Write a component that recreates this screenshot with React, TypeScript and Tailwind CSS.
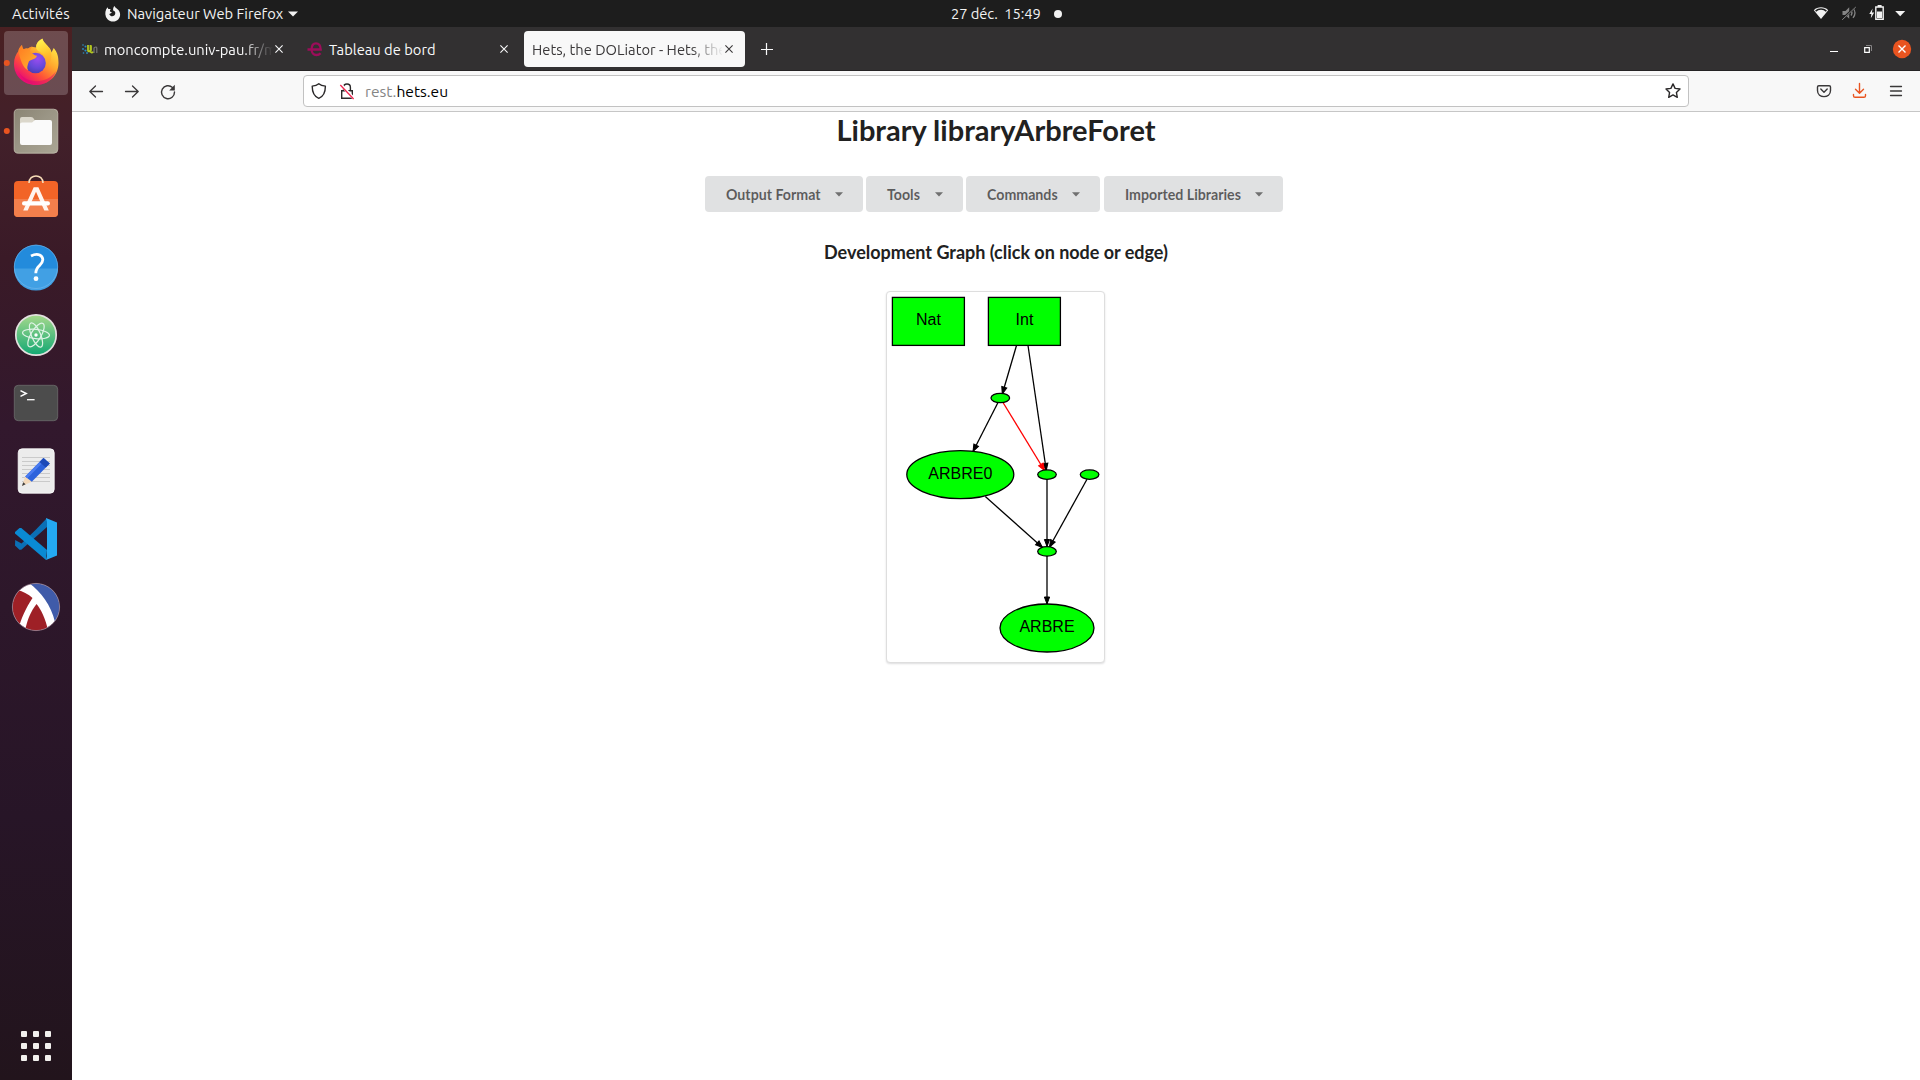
import React from "react";

const UI = "font-['Ubuntu','Noto_Sans',sans-serif]";

function TopBar() {
  return (
    <header className={`${UI} grid h-[27px] shrink-0 grid-cols-3 items-center bg-[#1d1d1d] text-[14.72px] leading-[26px] text-[#f2f2f2]`}>
      <div className="flex h-full items-center whitespace-nowrap pl-3">
        <span className="w-[59px] tracking-[0.1px]">Activités</span>
        <svg className="ml-[33px] h-[18px] w-[18px] shrink-0" viewBox="104 4 18 18">
          <path d="M106.2 8.2 L107.6 6.3 L108.3 8 L110.8 8.1 C109.8 9 109.7 10.2 110.6 11 L112 11.3 C111 12.8 109.6 12.7 109.3 13.2 C110.2 15.6 113.8 16 115 13.6 C116 11.5 114.6 10 113.2 9.6 C112.8 7.6 113.4 6 114.6 5 C115 7 117 7.3 118.4 9 C120.6 11.7 120.8 15.4 118.4 18.2 C115.6 21.4 110.4 21.4 107.5 18.2 C104.9 15.3 104.8 11.4 106.2 8.2 Z" fill="#f2f2f2" />
        </svg>
        <span className="ml-[5px] w-[157px]">Navigateur Web Firefox</span>
        <svg className="ml-[4px] h-[6px] w-[10px]" viewBox="0 0 10 6"><path d="M0 .5h10L5 5.6z" fill="#f2f2f2" /></svg>
      </div>
      <div className="flex h-full items-center whitespace-pre pl-[311px]">
        <span className="w-[91px] tracking-[-0.08px]">27 déc.  15:49</span>
        <span className="ml-[12px] h-2 w-2 rounded-full bg-[#f2f2f2]" />
      </div>
      <div className="flex h-full items-center justify-end">
        <svg className="h-[27px] w-[110px]" viewBox="1810 0 110 27">
          <path d="M1813.8 10.2 C1817.5 6.4 1824.5 6.4 1828.2 10.2 L1821 19 Z" fill="#f2f2f2" />
          <path d="M1815.6 11.1 C1818.5 8.4 1823.5 8.4 1826.4 11.1" fill="none" stroke="#1d1d1d" strokeWidth="1.5" />
          <g stroke="#858585" fill="none" strokeWidth="1.3">
            <path d="M1842.5 11h3l3.7-3.7v11.4l-3.7-3.7h-3z" fill="#858585" stroke="none" />
            <path d="M1851 10.5q2 2.5 0 5M1853 8.2q4 4.8 0 9.6" />
            <path d="M1841.8 19.6L1856 6.2" stroke="#1d1d1d" strokeWidth="2" />
            <path d="M1842.2 19.8L1855.8 7" strokeWidth="1" />
          </g>
          <path d="M1872.6 8.5l-3.3 5.6h2.1l-.6 4.2 3.4-5.7h-2.3z" fill="#f2f2f2" />
          <path d="M1875.8 7h7.4v12.2h-7.4z" fill="none" stroke="#f2f2f2" strokeWidth="1.4" />
          <path d="M1877.6 5h4v2h-4zM1877 11.5h5V18h-5z" fill="#f2f2f2" />
          <path d="M1895.2 11h10l-5 5.2z" fill="#f2f2f2" />
        </svg>
      </div>
    </header>
  );
}

function DockIcon({ row, running, active, children }: { row: number; running?: boolean; active?: boolean; children: React.ReactNode }) {
  return (
    <svg className="h-[68px] w-[72px] shrink-0" viewBox={`0 ${29 + row * 68} 72 68`}>
      {active && <rect x="4" y="31" width="64" height="64" rx="4" fill="#fff" fillOpacity=".2" />}
      {running && <circle cx="6.8" cy={63 + row * 68} r="3" fill="#e95420" />}
      {children}
    </svg>
  );
}

function Dock() {
  return (
    <nav className="flex w-[72px] shrink-0 flex-col bg-[linear-gradient(180deg,#4a2022_0%,#42202a_10%,#3a1a27_22%,#32182d_38%,#2d172a_55%,#271527_75%,#22141c_100%)] pt-[2px]">
      <DockIcon row={0} running active>
        <defs>
          <linearGradient id="ffBody" x1=".9" y1=".1" x2=".25" y2=".95">
            <stop offset="0" stopColor="#fff14a" /><stop offset=".4" stopColor="#ffa52c" /><stop offset=".7" stopColor="#ff5038" /><stop offset="1" stopColor="#e80878" />
          </linearGradient>
          <linearGradient id="ffTail" x1=".4" y1="0" x2=".6" y2="1">
            <stop offset="0" stopColor="#fff44f" /><stop offset=".5" stopColor="#ffc72e" /><stop offset="1" stopColor="#ff8a1e" stopOpacity="0" />
          </linearGradient>
          <radialGradient id="ffGlobe" cx=".6" cy=".3" r=".75">
            <stop offset="0" stopColor="#9a4df0" /><stop offset=".6" stopColor="#6548d8" /><stop offset="1" stopColor="#4a3cae" />
          </radialGradient>
          <linearGradient id="ffFox" x1="0" y1="0" x2="1" y2="1">
            <stop offset="0" stopColor="#ff7a22" /><stop offset="1" stopColor="#ffb52e" />
          </linearGradient>
        </defs>
        <path d="M14 64c0-6 2-10 4.500-13 .1-2 1.500-4 3.500-6 .2 2 .5 3 1.500 4.200 1.500-.6 3-.8 4.500-.4 2-2 5-2.400 9-1.300-1.500-4 2-7.500 5.500-9 1 4 4.500 6 6 8.500 1.500 1 2.500 3 3 5.500l2.200-4.500c4 4.500 4.800 9 4.800 15 0 12.500-10 22-22.500 22S14 76 14 64z" fill="url(#ffBody)" />
        <circle cx="35.500" cy="63" r="10.300" fill="url(#ffGlobe)" />
        <path d="M18.500 51c.1-2 1.500-4 3.500-6 .2 2 .5 3 1.500 4.200 1.500-.6 3-.8 4.500-.4 1.500-1.600 2.500-2 4.800-2.600-2 1.800-2.800 3.700-2.800 5 2 1 3 3.800 7 4.600-1 4-6.500 3.700-8 5.500-1.500 4-2.500 7-1 9-5.500-3-8-11.300-9.500-19.300z" fill="url(#ffFox)" />
        <path d="M42.500 39c1 4 4.500 6 6 8.500 4.500 6 3.500 13.500-1.500 20 .5-7-2-13-8-16-5-3-3.500-9.500 3.500-12.500z" fill="url(#ffTail)" />
        <path d="M18 71c7 13 29 14 38 0-6 18-30 19-38 0z" fill="#d90475" fillOpacity=".45" />
      </DockIcon>
      <DockIcon row={1} running>
        <defs><linearGradient id="files" x2="1" y2="1"><stop stopColor="#8a8473" /><stop offset=".45" stopColor="#9a9585" /><stop offset="1" stopColor="#aaa594" /></linearGradient></defs>
        <rect x="14.200" y="109.200" width="43.600" height="44" rx="4" fill="url(#files)" stroke="#c4bfb0" strokeWidth=".8" />
        <path d="M20 119q0-2 2-2h9q2 0 3 2l1 2h15v4H20z" fill="#dbd7cb" />
        <path d="M20 124q0-1.500 2-1.500h10l3-2.500h15q2 0 2 2v21q0 2-2 2H22q-2 0-2-2z" fill="#fafafa" />
      </DockIcon>
      <DockIcon row={2}>
        <rect x="14" y="181" width="44" height="36" rx="4" fill="#f26427" />
        <path d="M14 199h44v14q0 4-4 4H18q-4 0-4-4z" fill="#f37f4c" />
        <path d="M29 183c0-9.500 14-9.500 14 0" fill="none" stroke="#f8ddb8" strokeWidth="1.500" />
        <path d="M33.700 187.300h4.700l10.400 23.200h-4.500L36 191.800 27.700 210.500h-4.500z" fill="#fff4ee" />
        <rect x="22" y="201.300" width="28" height="4.200" rx="2.100" fill="#fff" />
      </DockIcon>
      <DockIcon row={3}>
        <circle cx="36" cy="266.800" r="22" fill="#238bdc" />
        <path d="M14 268.600a22 22 0 0 0 44 0z" fill="#41a0e4" />
        <circle cx="36" cy="266.800" r="21.700" fill="none" stroke="#76b9ec" strokeWidth=".6" />
        <path d="M31 256q5-2.600 8.700-1c4.600 2.500 3.600 7.300 0 10.300-2.800 2.400-3.900 4.200-3.900 8" fill="none" stroke="#fff" strokeWidth="2.800" />
        <circle cx="36" cy="278.700" r="2.400" fill="#fff" />
      </DockIcon>
      <DockIcon row={4}>
        <defs><linearGradient id="atom" x2="0" y2="1"><stop stopColor="#a6d98c" /><stop offset="1" stopColor="#12a873" /></linearGradient></defs>
        <circle cx="36" cy="335" r="20.200" fill="url(#atom)" stroke="#e3e0df" strokeWidth="1.700" />
        <g fill="none" stroke="#dff3e6" strokeWidth="1.200">
          <ellipse cx="36" cy="334" rx="13.500" ry="4.600" transform="rotate(6 36 334)" />
          <ellipse cx="36" cy="335" rx="13" ry="4.600" transform="rotate(67 36 335)" />
          <ellipse cx="36" cy="335" rx="13.500" ry="5" transform="rotate(121 36 335)" />
        </g>
        <circle cx="36" cy="335" r="1.700" fill="#fff" />
      </DockIcon>
      <DockIcon row={5}>
        <rect x="14.300" y="385.300" width="43.400" height="35.400" rx="4" fill="#4c4c4c" stroke="#6c6c6c" strokeWidth=".8" />
        <path d="M20.500 390.700l5.700 2.800-5.700 2.800" fill="none" stroke="#fff" strokeWidth="1.500" />
        <path d="M27 399.700h7.600" stroke="#fff" strokeWidth="1.300" />
      </DockIcon>
      <DockIcon row={6}>
        <rect x="18.200" y="448.800" width="36" height="44.400" rx="4" fill="#ececec" stroke="#fff" strokeWidth=".8" />
        <path d="M22 457.500h28M22 461.500h28M22 465.500h28M22 469.500h28M22 473.500h28M22 477.500h28M22 481.500h28" stroke="#cacaca" strokeWidth="1" />
        <path d="M22 486l3.200-9.500 6.500 5.200z" fill="#f4d9ba" />
        <path d="M22 486l1.200-3.700 2.400 2z" fill="#3f3f3f" />
        <path d="M25.200 476.500L43.500 458l6.300 5.500-18 18.300z" fill="#2d63dc" />
        <path d="M25.200 476.500L43.500 458l2 1.700-18.200 18.600z" fill="#4b7cf0" />
        <path d="M39.500 462l4-4 6.300 5.500-4 4z" fill="#1c4ab8" />
      </DockIcon>
      <DockIcon row={7}>
        <path d="M47 518l-11 11.500-14.500 14L15.200 540l-.2 5.500 4.500 4.300h1.800L47 527z" fill="#0b6fb5" />
        <path d="M19.500 528l-4.500 4v1.500L46 560l1-10-25.700-22z" fill="#0a8ad3" />
        <path d="M46 518l11 4.500v33L46 560l1-4v-34z" fill="#24a9f2" />
      </DockIcon>
      <DockIcon row={8}>
        <defs><clipPath id="lyx"><circle cx="36" cy="607" r="23.500" /></clipPath></defs>
        <g clipPath="url(#lyx)">
          <path d="M12 583h48v48H12z" fill="#fff" />
          <path d="M12 583v48h6c3-13 8-23 14.500-33-4-4-10-7-16-8z" fill="#9e2026" />
          <path d="M29 583c12 9 22 22 26 39h6v-39z" fill="#3f5ba9" />
          <path d="M25 632c1.500-11 6-21 11.500-28 5 6 9 15 12 28z" fill="#9e2026" />
        </g>
        <circle cx="36" cy="607" r="23.600" fill="none" stroke="#9b8192" strokeWidth=".7" />
      </DockIcon>
      <div className="mt-auto grid grid-cols-[repeat(3,6px)] gap-[6px] self-start pb-[19px] pl-[21px]">
        {Array.from({ length: 9 }, (_, i) => <span key={i} className="h-[6px] w-[6px] rounded-[1px] bg-[#f2f0ee]" />)}
      </div>
    </nav>
  );
}

function CloseX({ className }: { className: string }) {
  return (
    <svg className={`h-[8px] w-[8px] shrink-0 ${className}`} viewBox="0 0 8 8"><path d="M.4.4l7.200 7.200M7.600.4L.4 7.600" stroke="currentColor" strokeWidth="1.100" /></svg>
  );
}

function TabBar() {
  return (
    <div className={`${UI} flex h-[44px] shrink-0 items-center whitespace-nowrap border-b border-[#252324] bg-[#323031] pl-[2px] text-[14.72px] leading-[22px] text-[#f9f9fa]`}>
      <div className="flex h-9 w-[225px] items-center pl-2">
        <svg className="h-4 w-4 shrink-0" viewBox="82 41 16 16">
          <g fill="#2e8fc4"><circle cx="83" cy="45" r=".8" /><circle cx="85.500" cy="46.500" r="1" /><circle cx="83" cy="49" r=".9" /><circle cx="85.500" cy="50.500" r="1.100" /><circle cx="83.500" cy="53" r=".8" /><circle cx="87" cy="53" r=".9" /></g>
          <path d="M88 45v5.500q.5 2 3-.5V45.500M90.500 45v6q0 2.500 3 1" fill="none" stroke="#b4c81e" strokeWidth="1.800" />
          <path d="M94 53v-5q2.800-2.200 2.800.5V53" fill="none" stroke="#777" strokeWidth="1.200" />
        </svg>
        <span className="ml-[6px] w-[169px] pt-[2px] [mask-image:linear-gradient(90deg,#000_82%,transparent)]">moncompte.univ-pau.fr/m</span>
        <CloseX className="ml-[2px]" />
      </div>
      <div className="flex h-9 w-[225px] items-center pl-2">
        <svg className="h-4 w-4 shrink-0" viewBox="0 0 16 16"><path d="M.5 8.500h13.200C13.500 4 11.500 2.300 9 2.300 6 2.300 4.600 5 4.600 8.300c0 3.500 2 5.700 4.800 5.700 2 0 3.200-.7 4.200-1.800" fill="none" stroke="#9c0d5a" strokeWidth="2.300" /></svg>
        <span className="ml-[6px] w-[169px] pt-[2px]">Tableau de bord</span>
        <CloseX className="ml-[2px]" />
      </div>
      <div className="flex h-9 w-[221px] items-center rounded-[4px] bg-[#f8f8f8] pl-2 text-[#3a3839]">
        <span className="w-[190px] pt-[2px] [mask-image:linear-gradient(90deg,#000_84%,rgba(0,0,0,0.4)_93%,transparent_101%)]">Hets, the DOLiator - Hets, the</span>
        <CloseX className="ml-[3px]" />
      </div>
      <svg className="ml-[16px] h-3 w-3" viewBox="0 0 12 12"><path d="M5.500 0v12M0 6.500h12" stroke="#f9f9fa" strokeWidth="1.200" /></svg>
      <svg className="ml-auto h-[42px] w-[100px]" viewBox="1820 28 100 42">
        <path d="M1830 51.500h8" stroke="#fff" />
        <path d="M1864.700 47.700h4.600v4.600h-4.600z" fill="none" stroke="#fff" strokeWidth="1.200" />
        <path d="M1866 45.500h5.500v5.500" fill="none" stroke="#858384" />
        <circle cx="1902" cy="49" r="9.200" fill="#e95420" />
        <path d="M1898.500 45.500l7 7m0-7l-7 7" stroke="#fff" strokeWidth="1.400" />
      </svg>
    </div>
  );
}

function Toolbar() {
  return (
    <div className="flex h-[41px] shrink-0 border-b border-[#c6c6c6] bg-[#f8f8f8]">
      <svg className="h-10 w-[231px] shrink-0" viewBox="72 71 231 40">
        <g fill="none" stroke="#3a3839" strokeWidth="1.300" strokeLinecap="round" strokeLinejoin="round">
          <path d="M102.500 91.500H90M95.500 86l-5.700 5.500 5.700 5.500" />
          <path d="M125.500 91.500H138M132.500 86l5.700 5.500-5.700 5.500" />
          <path d="M172.500 87.500A6.500 6.500 0 1 0 174.500 92" strokeWidth="1.400" />
        </g>
        <path d="M174.800 84.800v5.600h-5.600z" fill="#3a3839" />
      </svg>
      <div className={`${UI} mt-[4px] flex h-8 w-[1386px] items-center rounded-[4px] border border-[#c2c2c2] bg-white text-[15.6px]`}>
        <svg className="h-[30px] w-[54px]" viewBox="304 76 54 30">
          <path d="M318.800 83.700c1.700 1.500 4 2.200 6.600 2.400 0 6.500-1.700 10.500-6.600 12.200-4.900-1.700-6.600-5.700-6.600-12.200 2.600-.2 4.900-.9 6.600-2.400z" fill="none" stroke="#2a2829" strokeWidth="1.400" strokeLinejoin="round" />
          <path d="M341.700 90.700h10.600v7.600h-10.600z" fill="none" stroke="#2a2829" strokeWidth="1.400" />
          <path d="M343.600 90.500v-3q0-3.500 3.400-3.500t3.400 3.500v3" fill="none" stroke="#2a2829" strokeWidth="1.400" />
          <path d="M340.800 84.600l13 14" stroke="#fff" strokeWidth="3" /><path d="M340.300 85l13.300 14" stroke="#f0244f" strokeWidth="1.300" />
        </svg>
        <span className="ml-[7px] pt-px text-[#858585]">rest.<span className="text-black">hets.eu</span></span>
        <svg className="ml-auto mr-[6px] h-[18px] w-[18px]" viewBox="0 0 18 18"><path d="M9 1.900l2.100 4.500 4.900.6-3.600 3.400.9 4.900L9 12.900l-4.300 2.400.9-4.900L2 7l4.900-.6z" fill="none" stroke="#2a2829" strokeWidth="1.400" strokeLinejoin="round" /></svg>
      </div>
      <svg className="ml-auto h-10 w-[120px]" viewBox="1800 71 120 40">
        <g fill="none" stroke="#3a3839" strokeWidth="1.400" strokeLinecap="round" strokeLinejoin="round">
          <path d="M1818.800 85.700h10.400q1.300 0 1.300 1.300v3.500c0 8.200-13 8.200-13 0V87q0-1.300 1.300-1.300z" />
          <path d="M1820.800 89l3.200 3.200 3.200-3.200" />
          <path d="M1890.500 86.500h11M1890.500 91h11M1890.500 95.500h11" strokeWidth="1.300" />
          <path d="M1859.500 83.500v9.500M1855.500 89.300l4 4 4-4M1853.500 94.500v1.200q0 1.600 1.600 1.600h8.800q1.600 0 1.600-1.600v-1.200" stroke="#e95420" />
        </g>
      </svg>
    </div>
  );
}

function MenuButton({ label, width }: { label: string; width: string }) {
  return (
    <button className={`flex h-9 items-center justify-between rounded-[4px] bg-[#e0e1e2] pl-[21px] pr-[20px] text-[14.2px] font-bold leading-[14px] text-black/60 ${width}`}>
      <span className="whitespace-nowrap pt-[2px]">{label}</span>
      <svg className="h-[5px] w-[8px]" viewBox="0 0 8 5"><path d="M0 .3h8L4 4.500z" fill="#707070" /></svg>
    </button>
  );
}

const edges = [
  { x1: 1016.5, y1: 345.5, x2: 1002.3, y2: 394, c: "#000" },
  { x1: 1028, y1: 345.5, x2: 1046.3, y2: 470.5, c: "#000" },
  { x1: 998, y1: 402.5, x2: 973, y2: 451.5, c: "#000" },
  { x1: 1003, y1: 402.5, x2: 1044.5, y2: 470.5, c: "#f00" },
  { x1: 985.3, y1: 496.5, x2: 1042.5, y2: 547.5, c: "#000" },
  { x1: 1047, y1: 479.3, x2: 1047, y2: 546.5, c: "#000" },
  { x1: 1087, y1: 479.3, x2: 1049.5, y2: 547, c: "#000" },
  { x1: 1047, y1: 556, x2: 1047, y2: 604, c: "#000" },
];

function Edge({ x1, y1, x2, y2, c }: { x1: number; y1: number; x2: number; y2: number; c: string }) {
  const angle = (Math.atan2(y2 - y1, x2 - x1) * 180) / Math.PI;
  return (
    <g stroke={c} fill={c}>
      <line x1={x1} y1={y1} x2={x2} y2={y2} strokeWidth="1.300" />
      <path d="M0 0L-7-2.600V2.600z" transform={`translate(${x2} ${y2}) rotate(${angle})`} strokeWidth="1" />
    </g>
  );
}

function Graph() {
  return (
    <div className="mr-[2px] mt-[27px] h-[372px] w-[219px] rounded-[4px] border border-[#dedede] bg-white shadow-[0_1px_2px_0_rgba(34,36,38,0.15)]">
      <svg className="h-[370px] w-[217px] font-['Liberation_Sans',sans-serif] text-[16px]" viewBox="887 292 217 370">
        {edges.map((e, i) => <Edge key={i} {...e} />)}
        <g fill="#0f0" stroke="#000" strokeWidth="1.300">
          <rect x="892.400" y="297.400" width="72" height="48" />
          <rect x="988.400" y="297.400" width="72" height="48" />
          <ellipse cx="1000.300" cy="398" rx="9.300" ry="4.700" />
          <ellipse cx="960.300" cy="474.600" rx="53.500" ry="24" />
          <ellipse cx="1047" cy="474.600" rx="9.300" ry="4.700" />
          <ellipse cx="1089.600" cy="474.600" rx="9.300" ry="4.700" />
          <ellipse cx="1047" cy="551.400" rx="9.300" ry="4.700" />
          <ellipse cx="1047" cy="628" rx="47" ry="24" />
        </g>
        <g textAnchor="middle" fill="#000">
          <text x="928.400" y="325">Nat</text>
          <text x="1024.500" y="325">Int</text>
          <text x="960.300" y="479">ARBRE0</text>
          <text x="1047" y="632">ARBRE</text>
        </g>
      </svg>
    </div>
  );
}

export default function App() {
  return (
    <div className="flex h-[1080px] w-[1920px] flex-col overflow-hidden bg-white">
      <TopBar />
      <div className="flex min-h-0 flex-1">
        <Dock />
        <div className="flex min-w-0 flex-1 flex-col">
          <TabBar />
          <Toolbar />
          <main className="flex flex-1 flex-col items-center font-['Lato',sans-serif] text-[#212121]">
            <h1 className="text-[29px] font-bold leading-9">Library libraryArbreForet</h1>
            <div className="mt-[28px] flex gap-[3px] pr-[4px]">
              <MenuButton label="Output Format" width="w-[158px]" />
              <MenuButton label="Tools" width="w-[97px]" />
              <MenuButton label="Commands" width="w-[134px]" />
              <MenuButton label="Imported Libraries" width="ml-px w-[179px]" />
            </div>
            <h3 className="mt-[28px] text-[18px] font-bold leading-6 tracking-[-0.02px]">Development Graph (click on node or edge)</h3>
            <Graph />
          </main>
        </div>
      </div>
    </div>
  );
}
